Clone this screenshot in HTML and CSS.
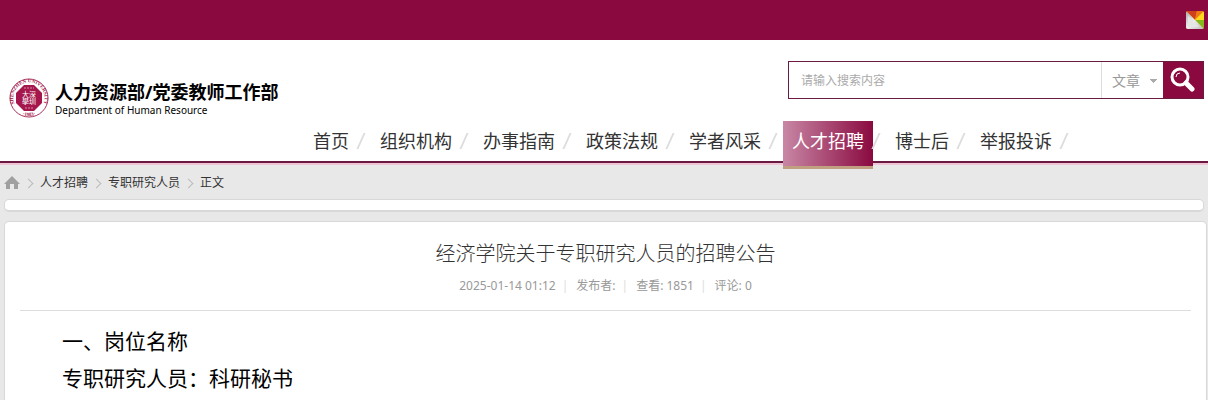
FILE: index.html
```html
<!DOCTYPE html>
<html lang="zh-CN">
<head>
<meta charset="UTF-8">
<meta name="viewport" content="width=device-width, initial-scale=1.0">
<title>经济学院关于专职研究人员的招聘公告</title>
<link rel="stylesheet" href="styles.css">
</head>
<body>
    <div class="topbar">
        <button type="button" class="skin-btn" aria-label="切换风格">
            <svg width="18" height="18" viewBox="0 0 18 18">
                <defs>
                    <linearGradient id="fold" x1="0" y1="0" x2="1" y2="1">
                        <stop offset="0" stop-color="#aaa"/>
                        <stop offset="0.5" stop-color="#eee"/>
                        <stop offset="1" stop-color="#bbb"/>
                    </linearGradient>
                    <clipPath id="round"><rect width="18" height="18" rx="2"/></clipPath>
                </defs>
                <g clip-path="url(#round)">
                    <rect width="18" height="18" fill="#e8b010"/>
                    <path d="M0 0H11L9 9z" fill="#d0401c"/>
                    <path d="M11 0H18L9 9z" fill="#f07a14"/>
                    <path d="M18 0V10L9 9z" fill="#ffd91c"/>
                    <path d="M18 9V18L9 9z" fill="#86b81c"/>
                    <path d="M0 0L18 18H0z" fill="url(#fold)"/>
                    <path d="M2 5L13 16H2z" fill="#e6e6e6"/>
                </g>
            </svg>
        </button>
    </div>

    <header class="header">
        <a href="#" class="logo">
            <svg class="seal" width="40" height="40" viewBox="0 0 40 40">
                <defs>
                    <path id="ring" d="M9 31A15.600 15.600 0 1 1 31 31"/>
                    <path id="ringBottom" d="M8 33.500A18 18 0 0 0 32 33.500"/>
                </defs>
                <circle cx="20" cy="20" r="19" fill="#fff" stroke="#a8305a"/>
                <text class="seal-ring" text-anchor="middle"><textPath href="#ring" startOffset="50%">SHENZHEN UNIVERSITY</textPath></text>
                <text class="seal-ring" text-anchor="middle"><textPath href="#ringBottom" startOffset="50%">·1983·</textPath></text>
                <path d="M15 7H25L33 15V25L25 33H15L7 25V15z" fill="#a5174c"/>
                <text class="seal-word" x="13" y="19">大深</text>
                <text class="seal-word" x="13" y="26">學圳</text>
                <path d="M15 10H25M16 30H24" stroke="#d98ba6" stroke-dasharray="2 1"/>
            </svg>
            <span class="logo-text">
                <strong>人力资源部/党委教师工作部</strong>
                <span>Department of Human Resource</span>
            </span>
        </a>
        <div class="header-main">
            <form class="search">
                <input type="text" class="search-input" placeholder="请输入搜索内容" aria-label="搜索内容">
                <select class="search-type" aria-label="搜索类型">
                    <option>文章</option>
                </select>
                <button type="submit" class="search-btn" aria-label="搜索">
                    <svg width="26" height="26" viewBox="0 0 26 26" fill="none" stroke="#fff">
                        <circle cx="10" cy="11" r="8" stroke-width="3"/>
                        <path d="M6 11A4 4 0 0 1 10 7" stroke-width="1"/>
                        <path d="M16 17L22 23" stroke-width="5" stroke-linecap="round"/>
                    </svg>
                </button>
            </form>
            <nav>
                <ul class="nav">
                    <li><a href="#">首页</a></li>
                    <li><a href="#">组织机构</a></li>
                    <li><a href="#">办事指南</a></li>
                    <li><a href="#">政策法规</a></li>
                    <li><a href="#">学者风采</a></li>
                    <li><a href="#" class="active">人才招聘</a></li>
                    <li><a href="#">博士后</a></li>
                    <li><a href="#">举报投诉</a></li>
                </ul>
            </nav>
        </div>
    </header>

    <div class="crumbs">
        <a href="#" class="home" aria-label="首页">
            <svg width="16" height="14" viewBox="0 0 16 14">
                <path d="M8 0L16 8H14V13H10V8H6V13H2V8H0z" fill="#a0a0a0"/>
            </svg>
        </a>
        <a href="#">人才招聘</a>
        <a href="#">专职研究人员</a>
        <span>正文</span>
    </div>

    <div class="strip"></div>

    <article class="article">
        <div class="article-head">
            <h1>经济学院关于专职研究人员的招聘公告</h1>
            <p class="meta">
                <span>2025-01-14 01:12</span>
                <span>发布者:</span>
                <span>查看: 1851</span>
                <span>评论: 0</span>
            </p>
        </div>
        <div class="content">
            <p>一、岗位名称</p>
            <p>专职研究人员：科研秘书</p>
        </div>
    </article>
</body>
</html>
```
FILE: styles.css
```css
* {
    box-sizing: border-box;
}
body {
    display: flex;
    flex-direction: column;
    min-height: 100vh;
    margin: 0;
    background: #e8e8e8;
    color: #333;
    font: 12px/18px "Noto Sans", "Noto Sans CJK SC", sans-serif;
}
a {
    color: inherit;
    text-decoration: none;
}
h1, p, ul {
    margin: 0;
    padding: 0;
}
svg {
    display: block;
}
button {
    padding: 0;
    border: 0;
    cursor: pointer;
}

/* top */
.topbar {
    display: flex;
    align-items: center;
    justify-content: flex-end;
    height: 40px;
    padding: 0 4px;
    background: #8a0a40;
}
.skin-btn {
    background: none;
}

.header {
    display: flex;
    padding: 0 4px;
    height: 125px;
    background: #fff;
    border-bottom: 2px solid #f0c4d4;
    box-shadow: inset 0 -2px #6a1a40;
}
.logo {
    display: flex;
    align-items: flex-start;
    gap: 6px;
    width: 300px;
    padding: 38px 0 0 5px;
    color: #000;
}
.seal-ring {
    font: bold 5px "Liberation Serif", serif;
    fill: #a5174c;
}
.seal-word {
    font: 7px "Noto Sans CJK TC", sans-serif;
    fill: #fff;
}
.logo-text {
    display: flex;
    flex-direction: column;
    padding-top: 3px;
    white-space: nowrap;
}
.logo-text strong {
    font-size: 18px;
    line-height: 22px;
}
.logo-text span {
    font-size: 10px;
    line-height: 14px;
}
.header-main {
    flex: 1;
}

/* search */
.search {
    display: flex;
    width: 416px;
    height: 38px;
    margin: 21px 0 22px auto;
    border: 1px solid #6a1a40;
}
.search-input {
    flex: 1;
    min-width: 0;
    padding: 1px 12px 0;
    border: 0;
    font: inherit;
}
.search-input::placeholder {
    color: #aaa;
}
.search-type {
    appearance: none;
    width: 62px;
    padding: 0 10px;
    border: 0;
    border-left: 1px solid #ddd;
    background: linear-gradient(to bottom right, #aaa 50%, transparent 50%) 52px 17px / 4px 4px no-repeat,
        linear-gradient(to bottom left, #aaa 50%, transparent 50%) 48px 17px / 4px 4px no-repeat, #fff;
    color: #999;
    font: 14px "Noto Sans CJK SC", sans-serif;
}
.search-btn {
    display: flex;
    justify-content: center;
    width: 40px;
    padding-top: 4px;
    background: #8a0a40;
}

/* nav */
.nav {
    display: flex;
    list-style: none;
    font-size: 18px;
    white-space: nowrap;
}
.nav li {
    display: flex;
}
.nav li::after {
    content: "";
    width: 2px;
    height: 16px;
    margin: 12px 9px 0 2px;
    background: #ddd;
    transform: skewX(-24deg);
}
.nav a {
    height: 48px;
    padding: 0 9px;
    line-height: 40px;
}
.nav .active {
    background: linear-gradient(to right, #c887a5, #8a0a40);
    border-bottom: 3px solid #c0a080;
    color: #fff;
}

/* breadcrumb */
.crumbs {
    display: flex;
    align-items: center;
    height: 34px;
    padding: 2px 4px 0;
}
.crumbs > * + *::before {
    content: "";
    display: inline-block;
    width: 6px;
    height: 6px;
    margin: 0 8px 0 5px;
    border: solid #bbb;
    border-width: 1px 1px 0 0;
    transform: rotate(45deg);
}
.strip {
    height: 13px;
    margin: 0 4px 9px;
    background: #fff;
    border: 1px solid #d8d8d8;
    border-bottom-width: 2px;
    border-radius: 5px;
}

/* article */
.article {
    flex: 1;
    margin: 0 1px 0 4px;
    padding: 0 15px;
    background: #fff;
    border: 1px solid #d8d8d8;
    border-bottom: 0;
    border-radius: 5px 5px 0 0;
}
.article-head {
    padding: 17px 0 15px;
    border-bottom: 1px solid #ddd;
    text-align: center;
}
.article h1 {
    font-size: 20px;
    font-weight: 300;
    line-height: 30px;
}
.meta {
    display: flex;
    justify-content: center;
    margin-top: 8px;
    color: #999;
}
.meta span + span::before {
    content: "|";
    margin: 0 8px 0 6px;
    color: #ddd;
}
.content {
    padding: 12px 42px 0;
    color: #000;
    font-size: 21px;
    line-height: 37px;
}
```
